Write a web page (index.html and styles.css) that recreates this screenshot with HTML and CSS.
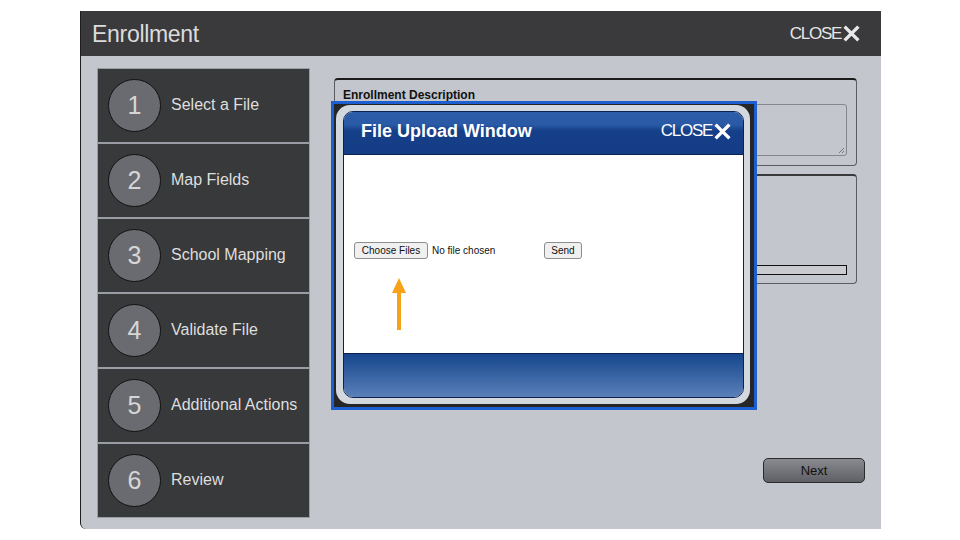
FILE: index.html
```html
<!DOCTYPE html>
<html>
<head>
<meta charset="utf-8">
<link rel="stylesheet" href="styles.css">
</head>
<body>
<div class="window">
  <div class="titlebar">
    <span class="title">Enrollment</span>
    <span class="close">CLOSE<svg class="x" viewBox="0 0 18 18" width="17" height="17"><path d="M3 3L15 15M15 3L3 15" stroke="#e8e8e8" stroke-width="3.6" stroke-linecap="square"/></svg></span>
  </div>
  <div class="content">
    <ul class="steps">
      <li class="step"><span class="num">1</span><span class="label">Select a File</span></li>
      <li class="step"><span class="num">2</span><span class="label">Map Fields</span></li>
      <li class="step"><span class="num">3</span><span class="label">School Mapping</span></li>
      <li class="step"><span class="num">4</span><span class="label">Validate File</span></li>
      <li class="step"><span class="num">5</span><span class="label">Additional Actions</span></li>
      <li class="step"><span class="num">6</span><span class="label">Review</span></li>
    </ul>
    <div class="main">
      <div class="box desc">
        <div class="desc-label">Enrollment Description</div>
        <div class="textarea"><svg class="grip" viewBox="0 0 8 8" width="8" height="8"><path d="M7 2L2 7M7 5L5 7" stroke="#777" stroke-width="1"/></svg></div>
      </div>
      <div class="box status">
        <div class="progress"></div>
      </div>
      <div class="actions">
        <button class="next">Next</button>
      </div>
    </div>
  </div>

  <div class="modal">
    <div class="frame">
      <div class="inner">
        <div class="m-head">
          <span class="m-title">File Upload Window</span>
          <span class="close m-close">CLOSE<svg class="x" viewBox="0 0 18 18" width="17" height="17"><path d="M3 3L15 15M15 3L3 15" stroke="#ffffff" stroke-width="3.6" stroke-linecap="square"/></svg></span>
        </div>
        <div class="m-body">
          <div class="upload-row">
            <button class="btn choose">Choose Files</button>
            <span class="nofile">No file chosen</span>
            <button class="btn send">Send</button>
          </div>
          <svg class="arrow" viewBox="0 0 16 54" width="16" height="54"><path d="M8 0L15 15H10V52H6V15H1Z" fill="#f8a21c"/></svg>
        </div>
        <div class="m-foot"></div>
      </div>
    </div>
  </div>
</div>
</body>
</html>
```

FILE: styles.css
```css
* { box-sizing: border-box; }
html, body { margin: 0; padding: 0; background: #ffffff; }
body { font-family: "Liberation Sans", Arial, sans-serif; }

.window {
  position: relative;
  margin: 11px 0 0 80px;
  width: 801px;
  height: 518px;
  background: #c3c6cd;
  border-left: 1px solid #1e1e1e;
  border-bottom-left-radius: 6px;
}

.titlebar {
  height: 45px;
  background: #3a3a3c;
  display: flex;
  align-items: center;
  justify-content: space-between;
  padding: 0 21px 0 11px;
}
.title {
  color: #dcdcdc;
  font-size: 23px;
  letter-spacing: -0.3px;
  padding-top: 1px;
}
.close {
  display: flex;
  align-items: center;
  gap: 2px;
  color: #e6e6e6;
  font-size: 17px;
  letter-spacing: -1.3px;
  font-weight: normal;
}
.close .x { display: block; }

.content {
  display: flex;
  padding: 12px 0 0 16px;
  gap: 24px;
}

.steps {
  list-style: none;
  margin: 0;
  padding: 0;
  width: 213px;
  height: 450px;
  border: 1px solid #9a9da4;
  background: #38393b;
}
.step {
  height: 75px;
  display: flex;
  align-items: center;
  padding-left: 10px;
  border-bottom: 2px solid #9a9da4;
}
.step:last-child { border-bottom: none; height: 73px; }
.num {
  width: 53px;
  height: 53px;
  border-radius: 50%;
  background: #6a6b70;
  border: 1px solid #111;
  color: #d6d6d6;
  font-size: 25px;
  display: flex;
  align-items: center;
  justify-content: center;
  flex-shrink: 0;
}
.label {
  color: #dedede;
  font-size: 16px;
  margin-left: 10px;
  padding-bottom: 1px;
}

.main {
  width: 531px;
  padding-top: 10px;
}
.box {
  width: 523px;
  border: 1px solid #5a5c62;
  border-top: 2px solid #1c1c1c;
  border-radius: 4px;
}
.desc {
  height: 88px;
  padding: 8px 9px 0 4px;
}
.desc-label {
  font-size: 12px;
  font-weight: bold;
  color: #111;
  padding-left: 4px;
  line-height: 14px;
}
.textarea {
  position: relative;
  height: 52px;
  margin-top: 2px;
  border: 1px solid #85878c;
  border-radius: 3px;
}
.grip { position: absolute; right: 1px; bottom: 1px; }
.status {
  margin-top: 8px;
  height: 110px;
  border-top: 2px solid #3a3a3c;
  padding: 89px 9px 0 4px;
}
.progress {
  height: 10px;
  border: 1px solid #111;
  background: #c9cbd0;
}
.actions {
  display: flex;
  justify-content: flex-end;
  margin-top: 174px;
}
.next {
  width: 102px;
  height: 25px;
  border: 1px solid #2a2a2a;
  border-radius: 5px;
  background: linear-gradient(#8a8b90, #5f6065);
  color: #111;
  font-family: "Liberation Sans", Arial, sans-serif;
  font-size: 13px;
  padding: 0;
}

.modal {
  position: absolute;
  left: 250px;
  top: 90px;
  width: 426px;
  height: 309px;
  border: 3px solid #1d5ed0;
  background: #262626;
  padding: 1px 4px 3px 2px;
}
.frame {
  height: 100%;
  background: #d3d8df;
  border-radius: 14px;
  padding: 6px 6px 6px 7px;
}
.inner {
  height: 100%;
  border: 1px solid #0c2352;
  border-radius: 10px;
  overflow: hidden;
  display: flex;
  flex-direction: column;
}
.m-head {
  height: 43px;
  background: linear-gradient(#2d5ca8 0%, #2a5aa6 30%, #153f88 45%, #143d86 100%);
  display: flex;
  align-items: center;
  justify-content: space-between;
  padding: 0 12px 4px 17px;
  border-bottom: 1px solid #0c2352;
}
.m-title {
  color: #ffffff;
  font-size: 18px;
  font-weight: bold;
}
.m-close { color: #ffffff; font-size: 17px; }
.m-body {
  height: 199px;
  background: #ffffff;
  padding: 87px 0 0 10px;
  border-bottom: 1px solid #0c2352;
}
.upload-row {
  display: flex;
  align-items: center;
  height: 17px;
}
.btn {
  height: 17px;
  border: 1px solid #8d8d8d;
  border-radius: 3px;
  background: #f0f0f0;
  font-family: "Liberation Sans", Arial, sans-serif;
  font-size: 10px;
  color: #111;
  padding: 0 6px;
}
.choose { width: 74px; }
.nofile {
  font-size: 10px;
  color: #111;
  margin-left: 4px;
  width: 112px;
}
.send { width: 38px; }
.arrow { display: block; margin: 19px 0 0 37px; }
.m-foot {
  flex: 1;
  background: linear-gradient(#16468d, #5a80b8);
}
```
